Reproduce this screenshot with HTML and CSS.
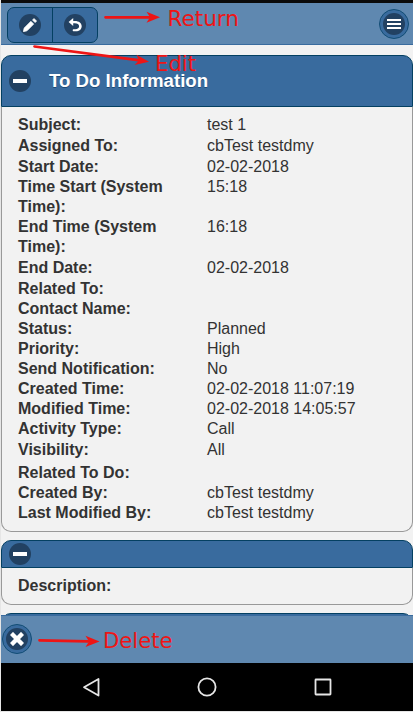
FILE: index.html
```html
<!DOCTYPE html>
<html lang="en">
<head>
<meta charset="utf-8">
<title>To Do Information</title>
<link rel="stylesheet" href="styles.css">
</head>
<body>
<div class="screen">
  <header class="topbar">
    <div class="group">
      <button class="btn" aria-label="Edit"><span class="disc"><svg width="14" height="14" viewBox="0 0 14 14"><path class="pencil" d="M1.200 10L.3 13.700l3.700-.9 6.700-6.700-2.800-2.800zM11 .5L9.500 2l2.600 2.600 1.500-1.500z"/></svg></span></button>
      <button class="btn" aria-label="Return"><span class="disc"><svg width="14" height="14" viewBox="0 0 14 14"><path d="M5.200 0L.6 4l4.600 4V5.300h1.600c2.700 0 4.300 1.100 4.300 3 0 1.700-1.400 2.900-3.600 2.900H5.800c-.8 0-1.100.4-1.100 1s.3 1.100 1.100 1.100h2c3.500 0 5.900-1.900 5.900-5 0-3.300-2.600-5.400-6.900-5.400H5.200z"/></svg></span></button>
    </div>
    <button class="round" aria-label="Menu"><span class="disc"><svg width="14" height="14" viewBox="0 0 14 14"><path d="M0 2h14v2H0zM0 6h14v2H0zM0 10h14v2H0z"/></svg></span></button>
  </header>
  <main class="content">
    <section class="card">
      <h2 class="head tall"><span class="disc"><svg width="14" height="14" viewBox="0 0 14 14"><path d="M0 5h14v4H0z"/></svg></span><span class="title">To Do Information</span></h2>
      <dl class="fields">
        <div class="row loose"><dt>Subject:</dt><dd>test 1</dd></div>
        <div class="row loose"><dt>Assigned To:</dt><dd>cbTest testdmy</dd></div>
        <div class="row"><dt>Start Date:</dt><dd>02-02-2018</dd></div>
        <div class="row"><dt>Time Start (System Time):</dt><dd>15:18</dd></div>
        <div class="row loose"><dt>End Time (System Time):</dt><dd>16:18</dd></div>
        <div class="row loose"><dt>End Date:</dt><dd>02-02-2018</dd></div>
        <div class="row"><dt>Related To:</dt><dd></dd></div>
        <div class="row"><dt>Contact Name:</dt><dd></dd></div>
        <div class="row"><dt>Status:</dt><dd>Planned</dd></div>
        <div class="row"><dt>Priority:</dt><dd>High</dd></div>
        <div class="row"><dt>Send Notification:</dt><dd>No</dd></div>
        <div class="row"><dt>Created Time:</dt><dd>02-02-2018 11:07:19</dd></div>
        <div class="row"><dt>Modified Time:</dt><dd>02-02-2018 14:05:57</dd></div>
        <div class="row loose"><dt>Activity Type:</dt><dd>Call</dd></div>
        <div class="row looser"><dt>Visibility:</dt><dd>All</dd></div>
        <div class="row"><dt>Related To Do:</dt><dd></dd></div>
        <div class="row"><dt>Created By:</dt><dd>cbTest testdmy</dd></div>
        <div class="row"><dt>Last Modified By:</dt><dd>cbTest testdmy</dd></div>
      </dl>
    </section>
    <section class="card">
      <h2 class="head"><span class="disc"><svg width="14" height="14" viewBox="0 0 14 14"><path d="M0 5h14v4H0z"/></svg></span></h2>
      <dl class="fields short">
        <div class="row"><dt>Description:</dt><dd></dd></div>
      </dl>
    </section>
    <section class="card"><h2 class="head"></h2></section>
  </main>
  <footer class="bottombar">
    <button class="round" aria-label="Delete"><span class="disc"><svg width="14" height="14" viewBox="0 0 14 14"><path class="cross" d="M3 3l8 8M11 3l-8 8"/></svg></span></button>
  </footer>
  <nav class="navbar">
    <svg width="412" height="48" viewBox="0 0 412 48">
      <path d="M97.500 16v16.500L83 24.300z"/>
      <circle cx="206" cy="24" r="8.600"/>
      <rect x="314.500" y="16.500" width="15" height="15" rx=".5"/>
    </svg>
  </nav>
</div>
<svg class="notes" width="413" height="712" viewBox="0 0 413 712">
  <path class="shaft" d="M105.500 17.300H150M34.500 46.500L138 60.200M39.500 640.300L88 641.300"/>
  <path d="M160 17.300l-13.500-5.500 3.500 5.500-3.500 5.500zM149 61.700l-12.500-7 2.500 5.800-4.500 4.500zM99.500 641.500l-14-5.800 3.500 5.700-3.500 5.500z"/>
  <text x="167.500" y="26" textLength="71.500" lengthAdjust="spacingAndGlyphs">Return</text>
  <text x="155" y="71" textLength="41" lengthAdjust="spacingAndGlyphs">Edit</text>
  <text x="103" y="648" textLength="69.500" lengthAdjust="spacingAndGlyphs">Delete</text>
</svg>
</body>
</html>
```
FILE: styles.css
```css
* { box-sizing: border-box; }
body {
  margin: 0;
  height: 712px;
  overflow: hidden;
  background: #e6e6e6;
  font: 16px/20px "Liberation Sans", Arial, sans-serif;
  color: #333;
}
.screen {
  display: flex;
  flex-direction: column;
  width: 412px;
  height: 711px;
  margin-left: 1px;
  background: #f2f2f2;
}
.topbar {
  display: flex;
  flex: none;
  justify-content: space-between;
  align-items: flex-start;
  height: 45px;
  padding: 4px 4px 0 6px;
  border-top: 3px solid #0b0b0b;
  border-bottom: 1px solid #396b9e;
  background: #5f88b0;
}
.group {
  display: flex;
  border: 1px solid #044062;
  border-radius: 7px;
  background: #396b9e;
  height: 36px;
}
button {
  display: flex;
  align-items: center;
  justify-content: center;
  margin: 0;
  padding: 0;
  border: 0;
  background: #396b9e;
}
.group .btn { width: 45px; background: none; }
.group .btn:first-child { border-right: 1px solid #044062; }
.group .btn:last-child { width: 44px; }
.disc {
  display: flex;
  flex: none;
  align-items: center;
  justify-content: center;
  width: 22px;
  height: 22px;
  border-radius: 50%;
  background: #224162;
}
.disc svg { fill: #fff; }
.pencil { stroke: #fff; stroke-width: .7; stroke-linejoin: round; }
.cross { stroke: #fff; stroke-width: 4.400; stroke-linecap: square; }
.round {
  width: 30px;
  height: 30px;
  border: 1px solid #124d75;
  border-radius: 50%;
}
.topbar .round { margin-top: 2px; }
.content {
  flex: none;
  height: 570px;
  padding-top: 10px;
  overflow: hidden;
}
.card { margin-bottom: 8px; }
.head {
  display: flex;
  align-items: center;
  height: 28px;
  margin: 0;
  padding-left: 7px;
  border: 1px solid #044062;
  border-radius: 10px 10px 0 0;
  background: #396b9e;
}
.tall { height: 52px; }
.title {
  margin-left: 18px;
  font-size: 18.650px;
  line-height: 24px;
  color: #fff;
  text-shadow: 0 1px 0 #1d4a76;
}
.fields {
  height: 425px;
  margin: 0;
  padding: 8px 0 0 16px;
  border: 1px solid #999;
  border-top: 0;
  border-radius: 0 0 10px 10px;
}
.short { height: 37px; }
.row {
  display: grid;
  grid-template-columns: 189px 1fr;
}
.loose { padding-bottom: 1px; }
.looser { padding-bottom: 3px; }
dt { font-weight: bold; }
dd { margin: 0; }
.bottombar {
  flex: none;
  height: 48px;
  padding: 8px 0 0 1px;
  border-top: 1px solid #396b9e;
  background: #5f88b0;
}
.navbar { flex: none; height: 48px; background: #000; }
.navbar svg { display: block; fill: none; stroke: #e6e6e6; stroke-width: 1.800; stroke-linejoin: round; }
.notes { position: absolute; top: 0; left: 0; fill: #ee1515; pointer-events: none; }
.notes text { font: 21px "DejaVu Sans", sans-serif; }
.shaft { fill: none; stroke: #ee1515; stroke-width: 2.700; stroke-linecap: round; }
```
